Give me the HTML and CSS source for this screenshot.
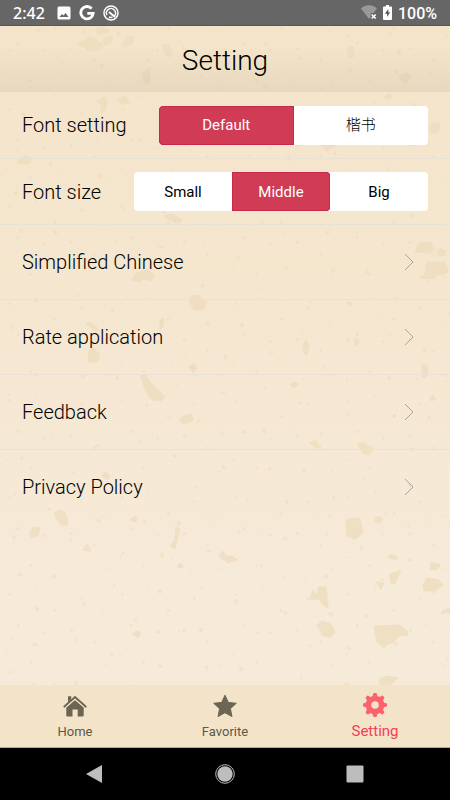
FILE: index.html
```html
<!DOCTYPE html>
<html lang="en">
<head>
<meta charset="utf-8">
<meta name="viewport" content="width=device-width, initial-scale=1">
<title>Setting</title>
<link rel="stylesheet" href="styles.css">
</head>
<body>
<div class="screen">
  <div class="status-bar">
    <span class="status-time">2:42</span>
    <svg class="status-icon" viewBox="0 0 14 14" width="14" height="14" aria-hidden="true"><path fill="#fff" fill-rule="evenodd" d="M2 .5h10A1.5 1.5 0 0 1 13.500 2v10a1.500 1.500 0 0 1-1.500 1.500H2A1.500 1.500 0 0 1 .5 12V2A1.500 1.500 0 0 1 2 .5ZM2.500 11h9L8.600 7 6.500 9.600 5 8Z"/></svg>
    <svg class="status-icon" viewBox="0 0 16 16" width="16" height="16" aria-hidden="true"><path fill="none" stroke="#fff" stroke-width="2.800" d="M12.700 3.600A6.200 6.200 0 1 0 14.200 8.400H8.300"/></svg>
    <svg class="status-icon" viewBox="0 0 16 16" width="16" height="16" aria-hidden="true"><g fill="none" stroke="#fff"><circle cx="8" cy="8" r="7" stroke-width="1.500"/><path stroke-width="1.400" d="M11.200 11.200A4.500 4.500 0 1 0 4 10.200M6 12a4.500 4.500 0 0 0 3.500.200"/><path stroke-width="2" d="m6 7 6 5"/></g></svg>
    <div class="status-right">
      <svg viewBox="0 0 16 15" width="16" height="15" aria-hidden="true"><path fill="#999" d="M0 3.500C4.500-.8 11.500-.8 16 3.500L12.500 8H9.800v4L8 14Z"/><path stroke="#fff" stroke-width="1.600" d="m10.700 9.500 4 4m0-4-4 4"/></svg>
      <svg viewBox="0 0 9 15" width="9" height="15" aria-hidden="true"><path fill="#fff" d="M3 0h3v1.500h2a1 1 0 0 1 1 1V14a1 1 0 0 1-1 1H1a1 1 0 0 1-1-1V2.500a1 1 0 0 1 1-1h2Z"/><path fill="#555" d="M5.300 4 1.900 8.800h2.200V12l3-4.700H5.300Z"/></svg>
      <span class="status-battery">100%</span>
    </div>
  </div>

  <div class="app">
    <svg class="paper" viewBox="0 26 450 722" preserveAspectRatio="xMidYMid slice" aria-hidden="true">
      <defs>
        <path id="speck-shapes" d="M8 12l2-1 1 2-2 1zM35 7l1-1 1 1-1 2zM53 28l3-1 1 2-2 1zM81 15l2 1-1 2-2-1zM102 32l1-2 2 2zM17 42l3 1-1 2-2 0zM43 51l1-2 2 1-1 2zM70 47l4 1-1 1-3 1zM93 60l2-2 1 2-2 2zM6 72l1-1 2 1-1 1zM29 80l3-1 0 2-2 1zM58 74l1-2 1 3zM76 88l2-1 1 2zM105 83l1-1 1 2-1 1zM65 5l1-1 1 1zM26 24l1 1-1 1zM88 34l1 0 0 2zM50 92l1-1 1 1zM13 57l1 1-2 1zM84 73l1-1 0 2z"/>
        <pattern id="specks" width="113" height="97" patternUnits="userSpaceOnUse"><use href="#speck-shapes"/></pattern>
        <pattern id="specks-turned" width="113" height="97" patternUnits="userSpaceOnUse" patternTransform="rotate(67) scale(1.4)"><use href="#speck-shapes"/></pattern>
      </defs>
      <rect class="specks" y="26" width="450" height="722" fill="url(#specks)"/>
      <rect class="specks" y="26" width="450" height="722" fill="url(#specks-turned)"/>
      <g class="blots">
        <path d="M78 42l8-1 2-4 7 1 3 4 5 2-1 4-5 2-9 1-4-4-6-2zM103 40l3-3 6-1 1 4-3 4-5 1zM122 43l5-5 7-2v5l-5 3-3 3-4-1zM95 29l8-2 7 3-4 3-8 1zM142 74l4-4 4-2v14l-4 2zM162 45l6-1 4 8-2 5-5-3zM347 48l4-2 3 2-1 9-4 1zM399 76l7-3 5 3-1 3-5 4-4-3zM397 51l3-1 1 4-4 0z"/>
        <path d="M101 99l4-2 2 5-2 9-4 3zM118 99l7-3 5 6-4 2-5 0zM18 160l6-4 8 2-2 5-7 1-5-2zM321 146l5-5 8 1 2 3-9 6zM429 126l5-4 6 2-2 8-7 2zM163 216l9-2 10 6-2 3-6-1zM384 97l6-3 2 3-5 3z"/>
        <path d="M132 280l4-7 12-3 7 6-4 5-7-2-5 3zM189 300l4-5 6 1 8 6-4 8-9 0zM86 323l5 0 8 7-4 1zM88 352l5-4 7 6-3 8-8 0zM140 376l5-2 6 9 14 14-4 4-9-1-6-9zM179 420l4-4 9-2 1 6-9 4zM189 367l5-4 3 5-4 5zM160 320l3-2 0 9-3 3z"/>
        <path d="M415 252l4-9 12-1 3 8-3 3zM437 251l4-2 5 2-2 5-6-1zM419 278l6-4 2-12 18 0 3 10-7 3-5 0-2 4zM303 346l3-6 3 5-2 10-3-1zM354 340l4-2 1 4-3 4zM422 365l5 0 1 8-3 5-3-1zM310 443l5-3 5 6-4 2zM357 443l7 0 9 6-4 6-6-2zM290 385l4-3 5 2-5 4zM430 398l3-3 3 4-5 2z"/>
        <path d="M55 515l4-5 6 2 3 10-2 4-6-2zM29 534l4-7 7 1-2 7-6 3zM83 550l4-6 4 7-3 0zM170 546l5-6 1-13 4 2-3 11-2 9zM130 520l4-4 4 2-3 4zM219 556l4-5 4 6-2 4zM225 557l6-1 6 4-10 3zM102 476l3-4 5 4-2 4zM132 634l5-3 4 2-3 5zM177 566l4-3 2 4-3 1z"/>
        <path d="M347 519l13-1 3 15-8 6-8-3-1-11zM318 587l8 0 1 11 1 10-5-3-6-9zM309 600l4-10 5 9zM317 625l5-4 9 3 4 8-4 5-8-1zM374 626l26-1 8 7 0 3-9 1-7 7-6 2-2 3-7-6zM390 574l6-2 5-2-6 14-4-1zM376 582l8 1-3 6zM423 585l4-7 12 2 4 5-8 6-11 0zM431 562l10 3-5 5-6 0zM442 611l8-3v5h-8zM375 518l4-2 4 3-3 4-5-1zM388 557l4-3 5 3-1 3zM379 679l9-3 10 2-6 6-12 1z"/>
      </g>
    </svg>

    <header class="header"><h1>Setting</h1></header>

    <main class="settings">
      <div class="row row-choice">
        <span id="font-label">Font setting</span>
        <div class="segments segments-wide" role="group" aria-labelledby="font-label">
          <button type="button" class="segment selected" aria-pressed="true">Default</button>
          <button type="button" class="segment" lang="zh-Hans" aria-pressed="false">楷书</button>
        </div>
      </div>
      <div class="row row-choice">
        <span id="size-label">Font size</span>
        <div class="segments" role="group" aria-labelledby="size-label">
          <button type="button" class="segment" aria-pressed="false">Small</button>
          <button type="button" class="segment selected" aria-pressed="true">Middle</button>
          <button type="button" class="segment" aria-pressed="false">Big</button>
        </div>
      </div>
      <a class="row row-link" href="#language">Simplified Chinese<svg class="chevron" viewBox="0 0 10 18" width="10" height="18" aria-hidden="true"><path d="m1 1 8 8-8 8"/></svg></a>
      <a class="row row-link" href="#rate">Rate application<svg class="chevron" viewBox="0 0 10 18" width="10" height="18" aria-hidden="true"><path d="m1 1 8 8-8 8"/></svg></a>
      <a class="row row-link" href="#feedback">Feedback<svg class="chevron" viewBox="0 0 10 18" width="10" height="18" aria-hidden="true"><path d="m1 1 8 8-8 8"/></svg></a>
      <a class="row row-link" href="#privacy">Privacy Policy<svg class="chevron" viewBox="0 0 10 18" width="10" height="18" aria-hidden="true"><path d="m1 1 8 8-8 8"/></svg></a>
    </main>

    <nav class="tabs">
      <a class="tab" href="#home">
        <svg viewBox="0 0 24 24" width="24" height="24" aria-hidden="true"><path d="m1.500 12.500 10.500-9.300 10.500 9.300" fill="none" stroke="#6c6554" stroke-width="2.200" stroke-linecap="round"/><path fill="#6c6554" d="M5 2.300h3.200v3L5 8.200ZM3.300 13.200 12 5.700l8.700 7.500v8.300a1 1 0 0 1-1 1h-5v-7H9.500v7H4.300a1 1 0 0 1-1-1Z"/><path d="m3 13.200 9-7.900 9 7.900" fill="none" stroke="#f3e3c9" stroke-width="1.100"/></svg>
        <span>Home</span>
      </a>
      <a class="tab" href="#favorite">
        <svg viewBox="0 0 24 24" width="24" height="24" aria-hidden="true"><path fill="#6c6554" stroke="#6c6554" stroke-linejoin="round" d="m12 1.200 3.300 7.200 8 .9-5.900 5.400 1.600 7.900-7-3.900-7 3.900 1.600-7.900L.7 9.300l8-.9Z"/></svg>
        <span>Favorite</span>
      </a>
      <a class="tab active" href="#setting" aria-current="page">
        <svg viewBox="0 0 24 24" width="24" height="24" aria-hidden="true"><g fill="#fb626b"><path fill-rule="evenodd" d="M12 2.700a9.300 9.300 0 1 0 0 18.600 9.300 9.300 0 0 0 0-18.600Zm0 5.500a3.800 3.800 0 1 1 0 7.600 3.800 3.800 0 0 1 0-7.600Z"/><path id="teeth" d="M9.400 4 10.200.800Q10.400 0 11 0h2q.6 0 .8.800L14.600 4ZM9.400 20l.8 3.200q.2.800.8.800h2q.6 0 .8-.8l.8-3.200Z"/><use href="#teeth" transform="rotate(45 12 12)"/><use href="#teeth" transform="rotate(90 12 12)"/><use href="#teeth" transform="rotate(135 12 12)"/></g></svg>
        <span>Setting</span>
      </a>
    </nav>
  </div>

  <div class="system-nav">
    <button type="button" aria-label="Back"><svg viewBox="0 0 20 20" width="20" height="20"><path fill="#bdbdbd" d="M17 1v18L1 10Z"/></svg></button>
    <button type="button" aria-label="Home screen"><svg viewBox="0 0 20 20" width="20" height="20"><circle cx="10" cy="10" r="9.300" fill="none" stroke="#bdbdbd"/><circle cx="10" cy="10" r="7.700" fill="#bdbdbd"/></svg></button>
    <button type="button" aria-label="Recent apps"><svg viewBox="0 0 20 20" width="20" height="20"><rect x="1.500" y="1.500" width="17" height="17" rx="1" fill="#bdbdbd"/></svg></button>
  </div>
</div>
</body>
</html>
```
FILE: styles.css
```css
* {
  box-sizing: border-box;
}

body {
  margin: 0;
  font-family: Roboto, "Noto Sans CJK SC", sans-serif;
  font-weight: 300;
  color: #000;
}

a {
  color: inherit;
  text-decoration: none;
}

button {
  margin: 0;
  padding: 0;
  border: 0;
  background: none;
  font: inherit;
  color: inherit;
}

.screen {
  display: flex;
  flex-direction: column;
  min-height: 100vh;
}

.status-bar {
  display: flex;
  align-items: center;
  gap: 8px;
  height: 26px;
  padding: 0 13px;
  border-bottom: 1px solid #565656;
  background: #666;
  color: #fff;
}

.status-time,
.status-battery {
  font-size: 16px;
  font-weight: 500;
  line-height: 24px;
}

.status-time {
  margin-right: 4px;
  font-family: "Noto Sans", sans-serif;
}

.status-battery {
  padding-top: 2px;
}

.status-right {
  display: flex;
  align-items: center;
  gap: 6px;
  margin-left: auto;
}

.app {
  position: relative;
  display: flex;
  flex: 1;
  flex-direction: column;
  background: linear-gradient(#f4e4ca, #f5e6cf 35%, #f6ead8 75%, #f6ead8);
}

.paper {
  position: absolute;
  inset: 0;
  width: 100%;
  height: 100%;
}

.specks {
  opacity: 0.4;
}

#speck-shapes {
  fill: #e8d4ae;
}

.blots {
  fill: #eddcbc;
  stroke: #eddcbc;
  stroke-linejoin: round;
  opacity: 0.7;
}

.header,
.settings,
.tabs {
  position: relative;
}

.header {
  display: flex;
  align-items: center;
  justify-content: center;
  height: 66px;
  background: linear-gradient(rgba(140, 125, 95, 0) 30%, rgba(140, 125, 95, 0.12));
}

.header h1 {
  margin: 0;
  padding-top: 3px;
  font-size: 28px;
  font-weight: 300;
  line-height: 32px;
}

.settings {
  flex: 1;
}

.row {
  display: flex;
  align-items: center;
  justify-content: space-between;
  padding: 0 22px;
  font-size: 20px;
  line-height: 24px;
}

.row + .row {
  border-top: 1px solid #e8e1d6;
}

.row-choice {
  height: 66px;
}

.row-link {
  height: 75px;
  padding-right: 36px;
}

.chevron path {
  fill: none;
  stroke: #a9a49c;
}

.segments {
  display: flex;
  width: 294px;
  height: 39px;
  border-radius: 4px;
  overflow: hidden;
  background: #fff;
}

.segments-wide {
  width: 269px;
}

.segment {
  flex: 1 1 0;
  font-size: 15px;
  font-weight: 400;
  line-height: 20px;
}

.segment:lang(zh) {
  font-weight: 300;
}

.segment.selected {
  background: #cf3c53;
  box-shadow: inset 0 0 0 1px #c9284a;
  color: #fff;
}

.segment.selected:first-child {
  border-radius: 4px 0 0 4px;
}

.segment + .segment.selected {
  border-radius: 0 4px 4px 0;
}

.tabs {
  display: flex;
  height: 63px;
  border-bottom: 1px solid #b5a88f;
  background: #f3e3c9;
}

.tab {
  display: flex;
  flex: 1;
  flex-direction: column;
  align-items: center;
  justify-content: center;
  gap: 5px;
  padding-top: 3px;
  color: #5c574b;
  font-size: 13px;
  font-weight: 400;
  line-height: 18px;
}

.tab.active {
  padding-top: 1px;
  color: #f4405a;
  font-size: 15px;
}

.system-nav {
  display: flex;
  align-items: center;
  justify-content: center;
  gap: 110px;
  height: 52px;
  background: #000;
}

.system-nav svg {
  display: block;
}
```
